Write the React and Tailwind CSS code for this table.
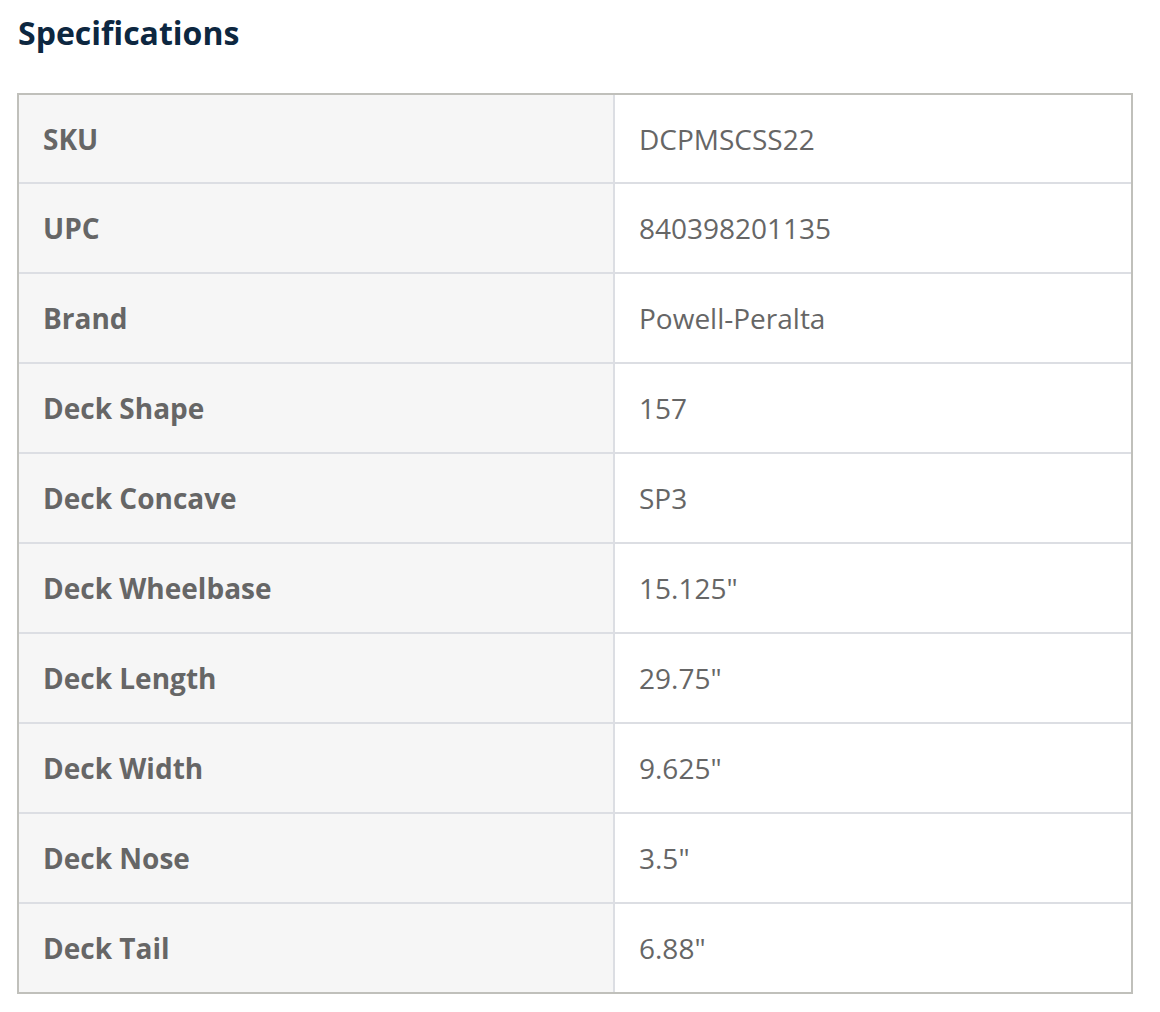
import React from 'react'

const specs = [
  { label: 'SKU', value: 'DCPMSCSS22' },
  { label: 'UPC', value: '840398201135' },
  { label: 'Brand', value: 'Powell-Peralta' },
  { label: 'Deck Shape', value: '157' },
  { label: 'Deck Concave', value: 'SP3' },
  { label: 'Deck Wheelbase', value: '15.125"' },
  { label: 'Deck Length', value: '29.75"' },
  { label: 'Deck Width', value: '9.625"' },
  { label: 'Deck Nose', value: '3.5"' },
  { label: 'Deck Tail', value: '6.88"' }
]

const App = () => {
  return (
    <div className="min-h-screen bg-white font-['Open_Sans',sans-serif]">
      <div className="pt-[17px]">
        <h2 className="pl-[18px] text-[32px] font-bold leading-none text-[#0d2740]">
          Specifications
        </h2>

        {/* Specs table */}
        <div className="mt-[44px] ml-[17px] w-[1116px] border-2 border-[#c0c0bb]">
          {specs.map((row) => (
            <div
              key={row.label}
              className="flex h-[90px] border-b-2 border-[#dcdee3] first:h-[89px] last:h-[88px] last:border-b-0"
            >
              <div className="flex w-[596px] items-center border-r-2 border-[#dcdee3] bg-[#f6f6f6] pl-[24px] text-[28px] font-bold text-[#666666]">
                {row.label}
              </div>
              <div className="flex flex-1 items-center pl-[24px] text-[28px] text-[#666666]">
                {row.value}
              </div>
            </div>
          ))}
        </div>
      </div>
    </div>
  )
}

export default App
